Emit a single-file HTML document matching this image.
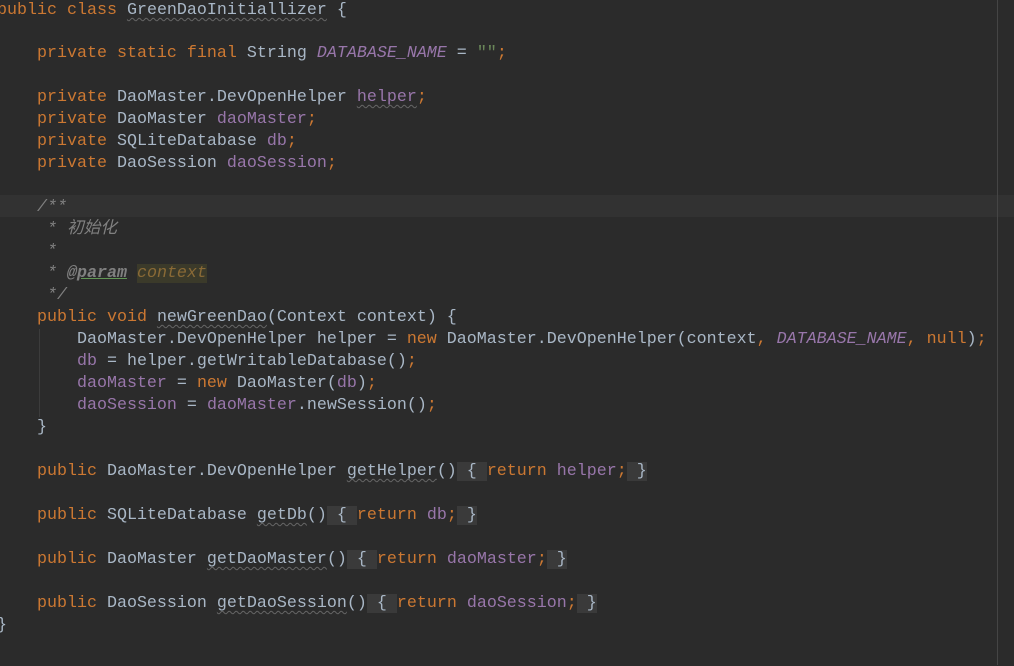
<!DOCTYPE html>
<html><head><meta charset="utf-8"><style>
html,body{margin:0;padding:0;background:#2b2b2b;width:1014px;height:665px;overflow:hidden}
.l{position:absolute;left:-3px;height:22px;line-height:22px;white-space:pre;font-family:"Liberation Mono","Noto Sans CJK SC",monospace;font-size:16.67px;color:#a9b7c6}
.k{color:#cc7832}.f{color:#9876aa}.fi{color:#9876aa;font-style:italic}.s{color:#6a8759}
.c{color:#808080;font-style:italic}
.u{text-decoration:underline wavy #666;text-decoration-thickness:1px;text-underline-offset:3px}
.b{background:#3a3a3a}
#w{position:absolute;left:0;top:1px;width:1014px;height:665px}
</style></head><body>
<div style="position:absolute;left:0;top:195px;width:1014px;height:22px;background:#323232"></div>
<div style="position:absolute;left:997px;top:0;width:1px;height:665px;background:#454545"></div>
<div style="position:absolute;left:39px;top:329px;width:1px;height:88px;background:#3c3c3c"></div>
<div id="w">
<div class="l" style="top:-1px"><span class="k">public class </span><span class="u">GreenDaoInitiallizer</span> {</div>
<div class="l" style="top:42px">    <span class="k">private static final </span>String <span class="fi">DATABASE_NAME</span> = <span class="s">""</span><span class="k">;</span></div>
<div class="l" style="top:86px">    <span class="k">private </span>DaoMaster.DevOpenHelper <span class="f u">helper</span><span class="k">;</span></div>
<div class="l" style="top:108px">    <span class="k">private </span>DaoMaster <span class="f">daoMaster</span><span class="k">;</span></div>
<div class="l" style="top:130px">    <span class="k">private </span>SQLiteDatabase <span class="f">db</span><span class="k">;</span></div>
<div class="l" style="top:152px">    <span class="k">private </span>DaoSession <span class="f">daoSession</span><span class="k">;</span></div>
<div class="l c" style="top:196px">    /**</div>
<div class="l c" style="top:218px">     * 初始化</div>
<div class="l c" style="top:240px">     *</div>
<div class="l c" style="top:262px">     * <b style="text-decoration:underline #629755">@param</b> <span style="background:#3b3a2a;color:#8a6a36">context</span></div>
<div class="l c" style="top:284px">     */</div>
<div class="l" style="top:306px">    <span class="k">public void </span><span class="u">newGreenDao</span>(Context context) {</div>
<div class="l" style="top:328px">        DaoMaster.DevOpenHelper helper = <span class="k">new </span>DaoMaster.DevOpenHelper(context<span class="k">, </span><span class="fi">DATABASE_NAME</span><span class="k">, null</span>)<span class="k">;</span></div>
<div class="l" style="top:350px">        <span class="f">db</span> = helper.getWritableDatabase()<span class="k">;</span></div>
<div class="l" style="top:372px">        <span class="f">daoMaster</span> = <span class="k">new </span>DaoMaster(<span class="f">db</span>)<span class="k">;</span></div>
<div class="l" style="top:394px">        <span class="f">daoSession</span> = <span class="f">daoMaster</span>.newSession()<span class="k">;</span></div>
<div class="l" style="top:416px">    }</div>
<div class="l" style="top:460px">    <span class="k">public </span>DaoMaster.DevOpenHelper <span class="u">getHelper</span>()<span class="b"> { </span><span class="k">return </span><span class="f">helper</span><span class="k">;</span><span class="b"> }</span></div>
<div class="l" style="top:504px">    <span class="k">public </span>SQLiteDatabase <span class="u">getDb</span>()<span class="b"> { </span><span class="k">return </span><span class="f">db</span><span class="k">;</span><span class="b"> }</span></div>
<div class="l" style="top:548px">    <span class="k">public </span>DaoMaster <span class="u">getDaoMaster</span>()<span class="b"> { </span><span class="k">return </span><span class="f">daoMaster</span><span class="k">;</span><span class="b"> }</span></div>
<div class="l" style="top:592px">    <span class="k">public </span>DaoSession <span class="u">getDaoSession</span>()<span class="b"> { </span><span class="k">return </span><span class="f">daoSession</span><span class="k">;</span><span class="b"> }</span></div>
<div class="l" style="top:614px">}</div>
</div>
</body></html>
